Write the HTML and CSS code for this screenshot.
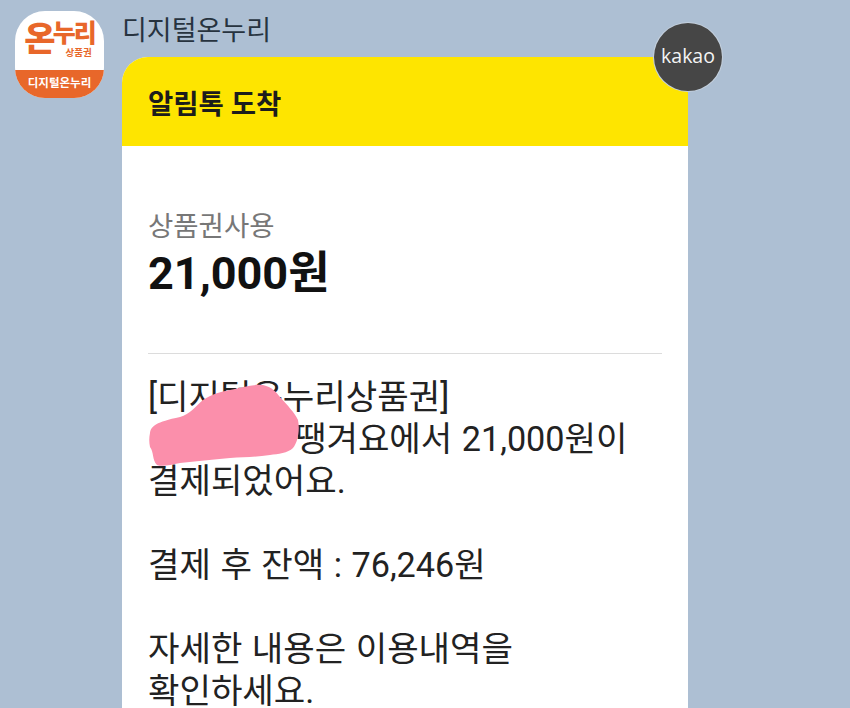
FILE: index.html
```html
<!DOCTYPE html>
<html lang="ko">
<head>
  <meta charset="UTF-8">
  <meta name="viewport" content="width=device-width, initial-scale=1.0">
  <title>알림톡 도착</title>
  <link rel="stylesheet" href="styles.css">
</head>
<body>
  <div class="chat">
    <div class="avatar">
      <div class="avatar-top">
        <span class="logo-on">온</span>
        <div class="logo-rest">
          <span class="logo-nuri">누리</span>
          <span class="logo-sub">상품권</span>
        </div>
      </div>
      <div class="avatar-bottom">디지털온누리</div>
    </div>
    <div class="message">
      <div class="sender">디지털온누리</div>
      <div class="card">
        <div class="kakao">kakao</div>
        <div class="card-head">알림톡 도착</div>
        <div class="card-body">
          <div class="summary">
            <div class="summary-label">상품권사용</div>
            <div class="summary-amount">21,000원</div>
          </div>
          <div class="text">
            <p>[디지털온누리상품권]<br><span class="masked"></span>땡겨요에서 21,000원이<br>결제되었어요.</p>
            <p>결제 후 잔액 : 76,246원</p>
            <p>자세한 내용은 이용내역을<br>확인하세요.</p>
          </div>
          <svg class="blob" width="154" height="84" viewBox="0 0 154 84">
            <path d="M2 49 C3 42 8 38 32 33 C42 30 48 22 55 16 C64 10 72 8 82 6 C95 3 106 0 115 1 C124 3 128 8 132 13 C140 22 146 28 150 36 C152 46 150 58 145 64 C140 69 130 70 122 71 C108 73 96 73 82 74 C64 76 48 77 32 79 C22 81 14 83 9 81 C4 76 6 68 2 63 C1 58 1 54 2 49 Z" fill="#fb8fab"/>
          </svg>
        </div>
      </div>
    </div>
  </div>
</body>
</html>
```

FILE: styles.css
```css
html, body {
  height: 100%;
}

body {
  margin: 0;
  overflow: hidden;
  background: #adbfd3;
  font-family: Roboto, "Noto Sans CJK KR", sans-serif;
  color: #222;
}

.chat {
  display: flex;
  align-items: flex-start;
  gap: 18px;
  padding: 11px 0 0 15px;
}

.avatar {
  width: 89px;
  height: 87px;
  border-radius: 30px;
  overflow: hidden;
  background: #fff;
  display: flex;
  flex-direction: column;
  flex-shrink: 0;
}

.avatar-top {
  flex: 1;
  display: flex;
  align-items: flex-start;
  justify-content: center;
  padding-top: 9px;
  color: #e8672a;
  font-weight: 900;
  line-height: 1;
}

.logo-on {
  font-size: 34px;
  line-height: 38px;
}

.logo-rest {
  display: flex;
  flex-direction: column;
  margin-left: -3px;
}

.logo-nuri {
  font-size: 25px;
  line-height: 27px;
  letter-spacing: -2px;
}

.logo-sub {
  align-self: flex-end;
  margin-right: 3px;
  font-size: 9.5px;
  font-weight: 700;
  line-height: 11px;
}

.avatar-bottom {
  height: 28px;
  background: #e8672a;
  color: #fff;
  font-size: 11.5px;
  font-weight: 700;
  line-height: 26px;
  text-align: center;
  white-space: nowrap;
}

.message {
  width: 566px;
}

.sender {
  height: 46px;
  font-size: 27px;
  line-height: 40px;
  color: #27333f;
}

.card {
  position: relative;
  border-radius: 26px 26px 0 0;
  background: #fff;
}

.card-head {
  height: 89px;
  padding-left: 26px;
  border-radius: 26px 26px 0 0;
  background: #fee500;
  font-size: 27.5px;
  font-weight: 700;
  line-height: 95px;
  color: #1c1c1c;
}

.kakao {
  position: absolute;
  top: -34px;
  right: -34px;
  width: 68px;
  height: 68px;
  border-radius: 50%;
  background: #464646;
  color: #f4f4f4;
  font-family: "Open Sans", sans-serif;
  font-size: 19.5px;
  line-height: 66px;
  text-align: center;
  box-shadow: 0 0 0 1px #c4d0dd;
}

.card-body {
  position: relative;
  padding: 60px 26px 60px;
}

.summary {
  padding-bottom: 53px;
  border-bottom: 1px solid #dcdcdc;
}

.summary-label {
  font-size: 27.5px;
  line-height: 42px;
  color: #777;
}

.summary-amount {
  font-size: 45px;
  font-weight: 700;
  line-height: 52px;
  color: #111;
}

.text {
  margin-top: 22px;
  font-size: 34.2px;
  line-height: 42px;
  word-spacing: 1px;
}

.text p {
  margin: 0 0 42px;
}

.masked {
  display: inline-block;
  width: 147px;
}

.blob {
  position: absolute;
  left: 26px;
  top: 238px;
}
```
